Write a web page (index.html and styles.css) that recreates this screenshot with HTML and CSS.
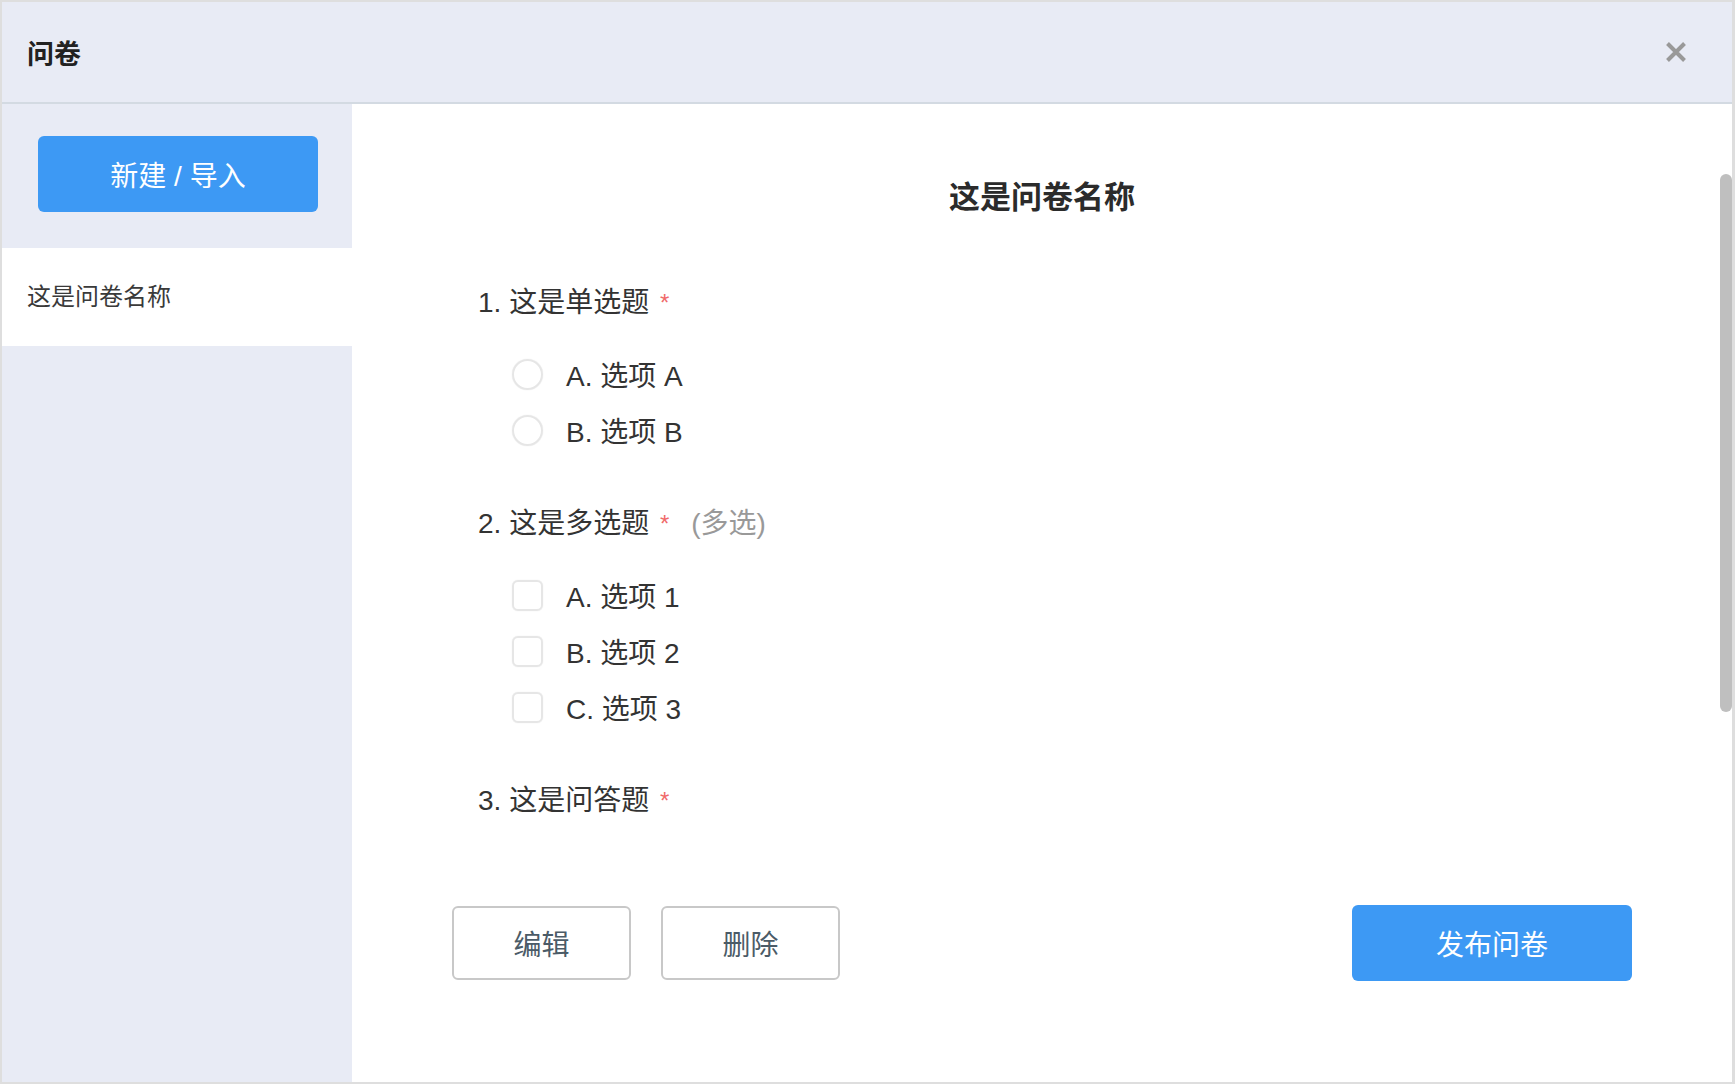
FILE: index.html
```html
<!DOCTYPE html>
<html lang="zh-CN">
<head>
  <meta charset="UTF-8">
  <title>问卷</title>
  <link rel="stylesheet" href="styles.css">
</head>
<body>

  <div class="frame">
    <!-- header -->
    <div class="header">
      <span class="header-title">问卷</span>
      <svg class="close" width="22" height="22" viewBox="0 0 22 22">
        <path d="M2.5 2.5 L19.5 19.5 M19.5 2.5 L2.5 19.5" stroke="#999" stroke-width="4" fill="none"/>
      </svg>
    </div>

    <div class="content">
      <!-- sidebar -->
      <div class="sidebar">
        <button class="btn-primary btn-new">新建 / 导入</button>
        <div class="side-item active">这是问卷名称</div>
      </div>

      <!-- main -->
      <div class="main">
        <h1 class="survey-title">这是问卷名称</h1>

        <div class="question first">
          <div class="q-title">1. 这是单选题 <span class="req">*</span></div>
          <div class="options">
            <div class="option"><span class="radio"></span>A. 选项 A</div>
            <div class="option"><span class="radio"></span>B. 选项 B</div>
          </div>
        </div>

        <div class="question">
          <div class="q-title">2. 这是多选题 <span class="req">*</span><span class="hint">(多选)</span></div>
          <div class="options">
            <div class="option"><span class="check"></span>A. 选项 1</div>
            <div class="option"><span class="check"></span>B. 选项 2</div>
            <div class="option"><span class="check"></span>C. 选项 3</div>
          </div>
        </div>

        <div class="question">
          <div class="q-title">3. 这是问答题 <span class="req">*</span></div>
        </div>

        <div class="actions">
          <div class="actions-left">
            <button class="btn-outline">编辑</button>
            <button class="btn-outline">删除</button>
          </div>
          <button class="btn-primary btn-publish">发布问卷</button>
        </div>

        <div class="scroll-thumb"></div>
      </div>
    </div>
  </div>

</body>
</html>
```

FILE: styles.css
```css
* {
  box-sizing: border-box;
}
body {
  margin: 0;
  font-family: "Liberation Sans", "Noto Sans CJK SC", sans-serif;
  color: #333;
  background: #fff;
}
.frame {
  width: 1735px;
  height: 1084px;
  border: 2px solid #dedede;
  border-right-width: 3px;
  display: flex;
  flex-direction: column;
}
.header {
  height: 102px;
  flex-shrink: 0;
  background: #e8ebf5;
  border-bottom: 2px solid #d3dae2;
  display: flex;
  align-items: center;
  justify-content: space-between;
  padding: 0 45px 0 25px;
}
.header-title {
  font-size: 27px;
  font-weight: bold;
  color: #222;
}
.close {
  display: block;
}
.content {
  flex: 1;
  display: flex;
  min-height: 0;
}
.sidebar {
  width: 350px;
  flex-shrink: 0;
  background: #e8ebf5;
  padding-top: 32px;
}
button {
  font-family: "Liberation Sans", "Noto Sans CJK SC", sans-serif;
  cursor: pointer;
}
.btn-primary {
  background: #3d99f4;
  color: #fff;
  border: none;
  border-radius: 6px;
  font-size: 28px;
}
.btn-new {
  display: block;
  width: 280px;
  height: 76px;
  margin: 0 0 36px 36px;
}
.side-item {
  height: 98px;
  line-height: 98px;
  padding-left: 25px;
  font-size: 24px;
  color: #3a3a3a;
}
.side-item.active {
  background: #fff;
}
.main {
  flex: 1;
  position: relative;
  background: #fff;
  padding-top: 74px;
}
.survey-title {
  margin: 0;
  text-align: center;
  font-size: 31px;
  line-height: 40px;
  font-weight: bold;
  color: #2b2b2b;
}
.question {
  margin-top: 46px;
  padding-left: 126px;
}
.question.first {
  margin-top: 65px;
}
.q-title {
  font-size: 28px;
  line-height: 40px;
  color: #333;
}
.req {
  color: #f06a6a;
  font-size: 24px;
  vertical-align: top;
  margin-left: 3px;
}
.hint {
  color: #999;
  margin-left: 22px;
}
.options {
  margin-top: 23px;
  padding-left: 34px;
}
.option {
  height: 56px;
  display: flex;
  align-items: center;
  font-size: 28px;
  color: #333;
}
.radio,
.check {
  width: 31px;
  height: 31px;
  border: 2px solid #e6e6e6;
  margin-right: 23px;
  flex-shrink: 0;
  box-shadow: 0 0 1px #ddd;
}
.radio {
  border-radius: 50%;
}
.check {
  border-radius: 6px;
}
.actions {
  margin-top: 84px;
  padding: 0 100px;
  display: flex;
  align-items: center;
  justify-content: space-between;
}
.actions-left {
  display: flex;
  gap: 30px;
}
.btn-outline {
  width: 179px;
  height: 74px;
  background: #fff;
  border: 2px solid #c8c8c8;
  border-radius: 6px;
  font-size: 28px;
  color: #4b5b67;
}
.btn-publish {
  width: 280px;
  height: 76px;
}
.scroll-thumb {
  position: absolute;
  top: 70px;
  right: 0;
  width: 12px;
  height: 538px;
  border-radius: 6px;
  background: #bfbfbf;
}
```
